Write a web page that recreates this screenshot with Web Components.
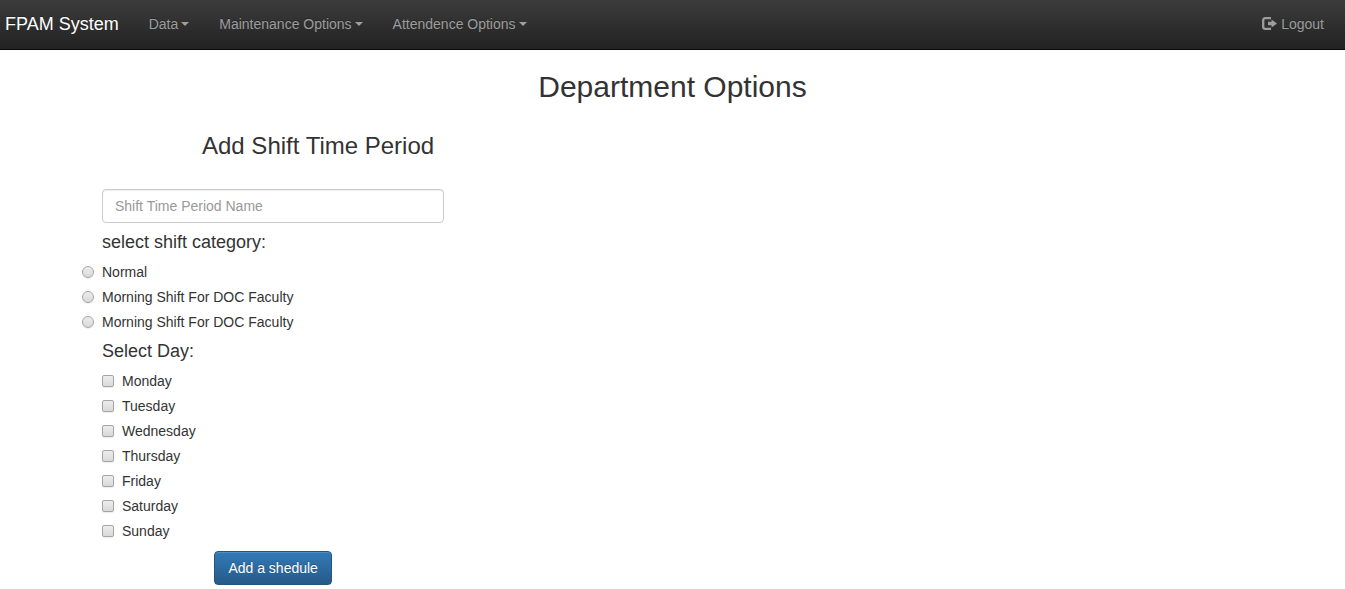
<!DOCTYPE html>
<html lang="en">
<head>
<meta charset="utf-8">
<meta name="viewport" content="width=device-width, initial-scale=1">
<title>FPAM System</title>
<style>
body { margin: 0; background: #fff; color: #333; font: 14px/20px "Liberation Sans", Arial, sans-serif; }
</style>
</head>
<body>
<fpam-navbar brand="FPAM System">
  <nav-item caret>Data</nav-item>
  <nav-item caret>Maintenance Options</nav-item>
  <nav-item caret>Attendence Options</nav-item>
  <nav-item slot="end" icon>Logout</nav-item>
</fpam-navbar>
<option-page>
  <span slot="title">Department Options</span>
  <shift-form></shift-form>
</option-page>

<script>
class FpamNavbar extends HTMLElement {
  constructor() {
    super();
    this.attachShadow({ mode: "open" }).innerHTML = `
      <style>
        :host { display: block; }
        nav { display: flex; align-items: center; justify-content: space-between;
          padding: 0 6px 0 5px; border-bottom: 1px solid #080808;
          background: linear-gradient(#3c3c3c, #222);
          text-shadow: 0 -1px 0 rgba(0,0,0,.25); }
        .start { display: flex; align-items: center; }
        .brand { color: #fff; font-size: 18px; line-height: 20px; text-decoration: none;
          padding: 14px 15px 15px 0; }
      </style>
      <nav>
        <div class="start"><a class="brand" href="#"></a><slot></slot></div>
        <slot name="end"></slot>
      </nav>`;
    this.shadowRoot.querySelector(".brand").textContent = this.getAttribute("brand");
  }
}

class NavItem extends HTMLElement {
  constructor() {
    super();
    this.attachShadow({ mode: "open" }).innerHTML = `
      <style>
        :host { display: block; }
        a { display: flex; align-items: center; padding: 14px 15px 15px; color: #9d9d9d; line-height: 20px;
          text-decoration: none; white-space: nowrap; }
        a:hover { color: #fff; }
        .caret, svg { display: none; }
        :host([caret]) .caret { display: block; margin-left: 3px; border: 4px solid transparent;
          border-top-color: currentColor; border-bottom: 0; }
        :host([icon]) svg { display: block; margin-right: 4px; }
      </style>
      <a href="#">
        <svg width="15" height="14" viewBox="0 0 15 14" aria-hidden="true">
          <path d="M9 1.2H3.2Q1.2 1.2 1.2 3.2V9.8Q1.2 11.8 3.2 11.8H9" fill="none" stroke="currentColor" stroke-width="2.3"/>
          <path d="M6 4.8H9.6V2.4L15 6.5L9.6 10.6V8.2H6Z" fill="currentColor"/>
        </svg>
        <slot></slot><span class="caret"></span>
      </a>`;
  }
}

class OptionPage extends HTMLElement {
  constructor() {
    super();
    this.attachShadow({ mode: "open" }).innerHTML = `
      <style>
        :host { display: block; }
        h1 { margin: 20px 0 30px; font-size: 30px; line-height: 33px; font-weight: 400; text-align: center; }
        main { max-width: 1141px; margin: 0 auto; padding: 0 15px; }
      </style>
      <h1><slot name="title"></slot></h1>
      <main><slot></slot></main>`;
  }
}

class ChoiceRow extends HTMLElement {
  constructor() {
    super();
    const type = this.getAttribute("type");
    this.attachShadow({ mode: "open" }).innerHTML = `
      <style>
        :host { display: block; }
        :host([type="radio"]) { margin-left: -20px; }
        label { display: flex; align-items: center; gap: 8px; line-height: 20px; cursor: pointer; }
        input { appearance: none; box-sizing: border-box; flex: none; width: 12px; height: 12px; margin: 0;
          border: 1px solid #a5a5a5; border-radius: 2px; background: linear-gradient(#ededed, #d9d9d9);
          box-shadow: 0 1px 1px rgba(0,0,0,.08); }
        input[type="radio"] { border-radius: 50%; }
        input:checked { background: #555; box-shadow: inset 0 0 0 2px #e5e5e5; }
      </style>
      <label><input type="${type}"><span><slot></slot></span></label>`;
    const input = this.shadowRoot.querySelector("input");
    input.addEventListener("change", () => {
      if (type !== "radio") return;
      for (const row of this.parentNode.querySelectorAll('choice-row[type="radio"]')) {
        if (row !== this) row.shadowRoot.querySelector("input").checked = false;
      }
    });
  }
}

class ShiftForm extends HTMLElement {
  constructor() {
    super();
    const shifts = ["Normal", "Morning Shift For DOC Faculty", "Morning Shift For DOC Faculty"];
    const days = ["Monday", "Tuesday", "Wednesday", "Thursday", "Friday", "Saturday", "Sunday"];
    const rows = (type, names) => names.map(n => `<choice-row type="${type}">${n}</choice-row>`).join("");
    this.attachShadow({ mode: "open" }).innerHTML = `
      <style>
        :host { display: block; }
        h2 { margin: 0 0 30px 100px; font-size: 24px; line-height: 26px; font-weight: 400; }
        form { width: 30%; min-width: 260px; }
        input { box-sizing: border-box; display: block; width: 100%; height: 34px; padding: 6px 12px;
          font: inherit; color: #555; background: #fff; border: 1px solid #ccc; border-radius: 4px;
          box-shadow: inset 0 1px 1px rgba(0,0,0,.075); }
        input::placeholder { color: #999; opacity: 1; }
        h3 { margin: 9px 0 10px; font-size: 18px; line-height: 20px; font-weight: 400; }
        .choices { display: grid; gap: 5px; }
        button { display: block; margin: 10px auto 0; padding: 6px 13px; font: inherit; color: #fff;
          border: 1px solid #245580; border-radius: 4px; background: linear-gradient(#337ab7, #265a88);
          text-shadow: 0 -1px 0 rgba(0,0,0,.2);
          box-shadow: inset 0 1px 0 rgba(255,255,255,.15), 0 1px 1px rgba(0,0,0,.075); }
      </style>
      <h2>Add Shift Time Period</h2>
      <form>
        <input type="text" placeholder="Shift Time Period Name" aria-label="Shift Time Period Name">
        <h3 id="category">select shift category:</h3>
        <div class="choices" role="radiogroup" aria-labelledby="category">${rows("radio", shifts)}</div>
        <h3 id="day">Select Day:</h3>
        <div class="choices" role="group" aria-labelledby="day">${rows("checkbox", days)}</div>
        <button type="button">Add a shedule</button>
      </form>`;
  }
}

customElements.define("fpam-navbar", FpamNavbar);
customElements.define("nav-item", NavItem);
customElements.define("option-page", OptionPage);
customElements.define("choice-row", ChoiceRow);
customElements.define("shift-form", ShiftForm);
</script>
</body>
</html>
